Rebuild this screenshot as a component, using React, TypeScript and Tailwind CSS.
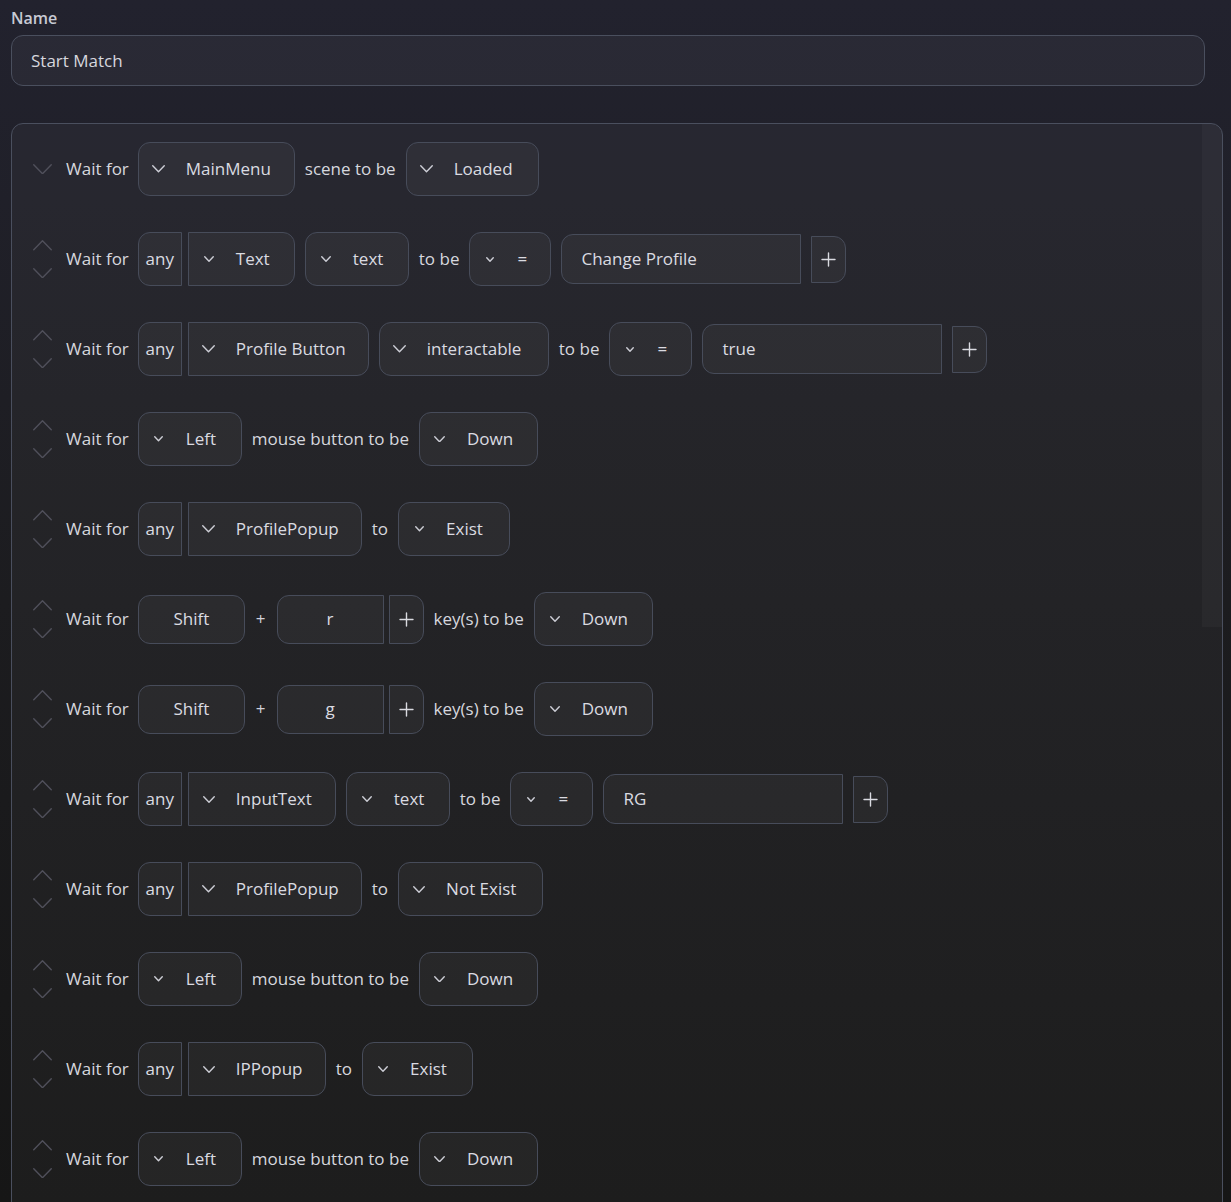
import React from 'react';

type Item =
  | { kind: 'text'; v: string }
  | { kind: 'drop'; v: string; w: number; chev?: number }
  | { kind: 'any'; v: string; w: number; chev?: number }
  | { kind: 'value'; v: string }
  | { kind: 'keys'; keys: string[] };

type Row = { up: boolean; items: Item[] };

const rows: Row[] = [
  {
    up: false,
    items: [
      { kind: 'drop', v: 'MainMenu', w: 157, chev: 13 },
      { kind: 'text', v: 'scene to be' },
      { kind: 'drop', v: 'Loaded', w: 133, chev: 13 },
    ],
  },
  {
    up: true,
    items: [
      { kind: 'any', v: 'Text', w: 107, chev: 10 },
      { kind: 'drop', v: 'text', w: 104, chev: 10 },
      { kind: 'text', v: 'to be' },
      { kind: 'drop', v: '=', w: 82, chev: 8 },
      { kind: 'value', v: 'Change Profile' },
    ],
  },
  {
    up: true,
    items: [
      { kind: 'any', v: 'Profile Button', w: 181, chev: 13 },
      { kind: 'drop', v: 'interactable', w: 170, chev: 13 },
      { kind: 'text', v: 'to be' },
      { kind: 'drop', v: '=', w: 83, chev: 8 },
      { kind: 'value', v: 'true' },
    ],
  },
  {
    up: true,
    items: [
      { kind: 'drop', v: 'Left', w: 104, chev: 9 },
      { kind: 'text', v: 'mouse button to be' },
      { kind: 'drop', v: 'Down', w: 119, chev: 11 },
    ],
  },
  {
    up: true,
    items: [
      { kind: 'any', v: 'ProfilePopup', w: 174, chev: 13 },
      { kind: 'text', v: 'to' },
      { kind: 'drop', v: 'Exist', w: 112, chev: 9 },
    ],
  },
  {
    up: true,
    items: [
      { kind: 'keys', keys: ['Shift', 'r'] },
      { kind: 'text', v: 'key(s) to be' },
      { kind: 'drop', v: 'Down', w: 119, chev: 10 },
    ],
  },
  {
    up: true,
    items: [
      { kind: 'keys', keys: ['Shift', 'g'] },
      { kind: 'text', v: 'key(s) to be' },
      { kind: 'drop', v: 'Down', w: 119, chev: 10 },
    ],
  },
  {
    up: true,
    items: [
      { kind: 'any', v: 'InputText', w: 148, chev: 12 },
      { kind: 'drop', v: 'text', w: 104, chev: 10 },
      { kind: 'text', v: 'to be' },
      { kind: 'drop', v: '=', w: 83, chev: 8 },
      { kind: 'value', v: 'RG' },
    ],
  },
  {
    up: true,
    items: [
      { kind: 'any', v: 'ProfilePopup', w: 174, chev: 13 },
      { kind: 'text', v: 'to' },
      { kind: 'drop', v: 'Not Exist', w: 145, chev: 12 },
    ],
  },
  {
    up: true,
    items: [
      { kind: 'drop', v: 'Left', w: 104, chev: 9 },
      { kind: 'text', v: 'mouse button to be' },
      { kind: 'drop', v: 'Down', w: 119, chev: 11 },
    ],
  },
  {
    up: true,
    items: [
      { kind: 'any', v: 'IPPopup', w: 138, chev: 12 },
      { kind: 'text', v: 'to' },
      { kind: 'drop', v: 'Exist', w: 111, chev: 10 },
    ],
  },
  {
    up: true,
    items: [
      { kind: 'drop', v: 'Left', w: 104, chev: 9 },
      { kind: 'text', v: 'mouse button to be' },
      { kind: 'drop', v: 'Down', w: 119, chev: 11 },
    ],
  },
];

const Chevron = ({ size = 12, up = false, className = '' }: { size?: number; up?: boolean; className?: string }) => {
  const h = size / 2 + 1;
  return (
    <svg width={size} height={h} viewBox={`0 0 ${size} ${h}`} className={className} fill="none">
      <path
        d={up ? `M0.75 ${h - 0.75} L${size / 2} 0.75 L${size - 0.75} ${h - 0.75}` : `M0.75 0.75 L${size / 2} ${h - 0.75} L${size - 0.75} 0.75`}
        stroke="currentColor"
        strokeWidth={1.4}
        strokeLinecap="round"
        strokeLinejoin="round"
      />
    </svg>
  );
};

const PlusIcon = () => (
  <svg width="15" height="15" viewBox="0 0 15 15" fill="none">
    <path d="M7.5 1v13M1 7.5h13" stroke="currentColor" strokeWidth={1.4} strokeLinecap="round" />
  </svg>
);

const boxBase = 'flex items-center border border-[#474c5a] bg-white/[0.035] text-[#dadbe1]';

const Dropdown = ({ label, w, chev = 12, joined = false }: { label: string; w: number; chev?: number; joined?: boolean }) => (
  <div
    className={`${boxBase} h-[54px] pl-[13px] ${joined ? 'rounded-r-xl' : 'rounded-xl'}`}
    style={{ width: w }}
  >
    <div className="flex w-[14px] justify-center text-[#cdced6]">
      <Chevron size={chev} />
    </div>
    <span className="ml-[20px] whitespace-nowrap">{label}</span>
  </div>
);

const AnyDropdown = ({ label, w, chev }: { label: string; w: number; chev?: number }) => (
  <div className="flex items-center gap-[6px]">
    <div className={`${boxBase} h-[54px] w-[44px] justify-center rounded-l-xl`}>any</div>
    <Dropdown label={label} w={w} chev={chev} joined />
  </div>
);

const ValueInput = ({ value }: { value: string }) => (
  <div className="flex items-center gap-[10px]">
    <div className={`${boxBase} h-[50px] w-[240px] rounded-l-xl pl-[19px]`}>{value}</div>
    <button className={`${boxBase} h-[47px] w-[35px] justify-center rounded-r-xl text-[#d0d1d9]`}>
      <PlusIcon />
    </button>
  </div>
);

const KeyCombo = ({ keys }: { keys: string[] }) => (
  <div className="flex items-center">
    <div className={`${boxBase} h-[49px] w-[107px] justify-center rounded-xl`}>{keys[0]}</div>
    <span className="mx-[11px] text-[17px] text-[#d0d1d9]">+</span>
    <div className={`${boxBase} h-[49px] w-[107px] justify-center rounded-l-xl`}>{keys[1]}</div>
    <button className={`${boxBase} ml-[5px] h-[49px] w-[35px] justify-center rounded-r-xl text-[#d0d1d9]`}>
      <PlusIcon />
    </button>
  </div>
);

const RowItem = ({ item }: { item: Item }) => {
  switch (item.kind) {
    case 'text':
      return <span className="whitespace-nowrap text-[#d6d7de]">{item.v}</span>;
    case 'drop':
      return <Dropdown label={item.v} w={item.w} chev={item.chev} />;
    case 'any':
      return <AnyDropdown label={item.v} w={item.w} chev={item.chev} />;
    case 'value':
      return <ValueInput value={item.v} />;
    case 'keys':
      return <KeyCombo keys={item.keys} />;
  }
};

export default function App() {
  return (
    <div
      className="h-[1202px] overflow-hidden bg-gradient-to-b from-[#22222e] via-[#1c1c1f] to-[#161616] text-[17px]"
      style={{ fontFamily: '"Open Sans", "Noto Sans", sans-serif' }}
    >
      <div className="pl-[11px] pt-[8px]">
        <label className="block text-[16px] font-semibold leading-[20px] text-[#c8cad4]">Name</label>
        <div className="mt-[7px] flex h-[51px] w-[1194px] items-center rounded-xl border border-[#4a4f5e] bg-white/[0.04] pl-[19px] text-[17px] text-[#d6d7de]">
          Start Match
        </div>

        <div className="mt-[37px] flex h-[1100px] w-[1212px] overflow-hidden rounded-xl border border-[#4a4f5e] bg-white/[0.03]">
          <div className="flex-1">
            {rows.map((row, i) => (
              <div key={i} className="flex h-[90px] items-center pl-[21px]">
                <div className="flex w-[19px] flex-col items-center justify-center gap-[17px] text-[#50505b]">
                  {row.up && <Chevron size={19} up />}
                  <Chevron size={19} />
                </div>
                <span className="ml-[14px] mr-[9px] whitespace-nowrap text-[#d6d7de]">Wait for</span>
                <div className="flex items-center gap-[10px]">
                  {row.items.map((it, j) => (
                    <RowItem key={j} item={it} />
                  ))}
                </div>
              </div>
            ))}
          </div>
          <div className="w-[20px]">
            <div className="h-[503px] bg-white/[0.03]" />
          </div>
        </div>
      </div>
    </div>
  );
}
